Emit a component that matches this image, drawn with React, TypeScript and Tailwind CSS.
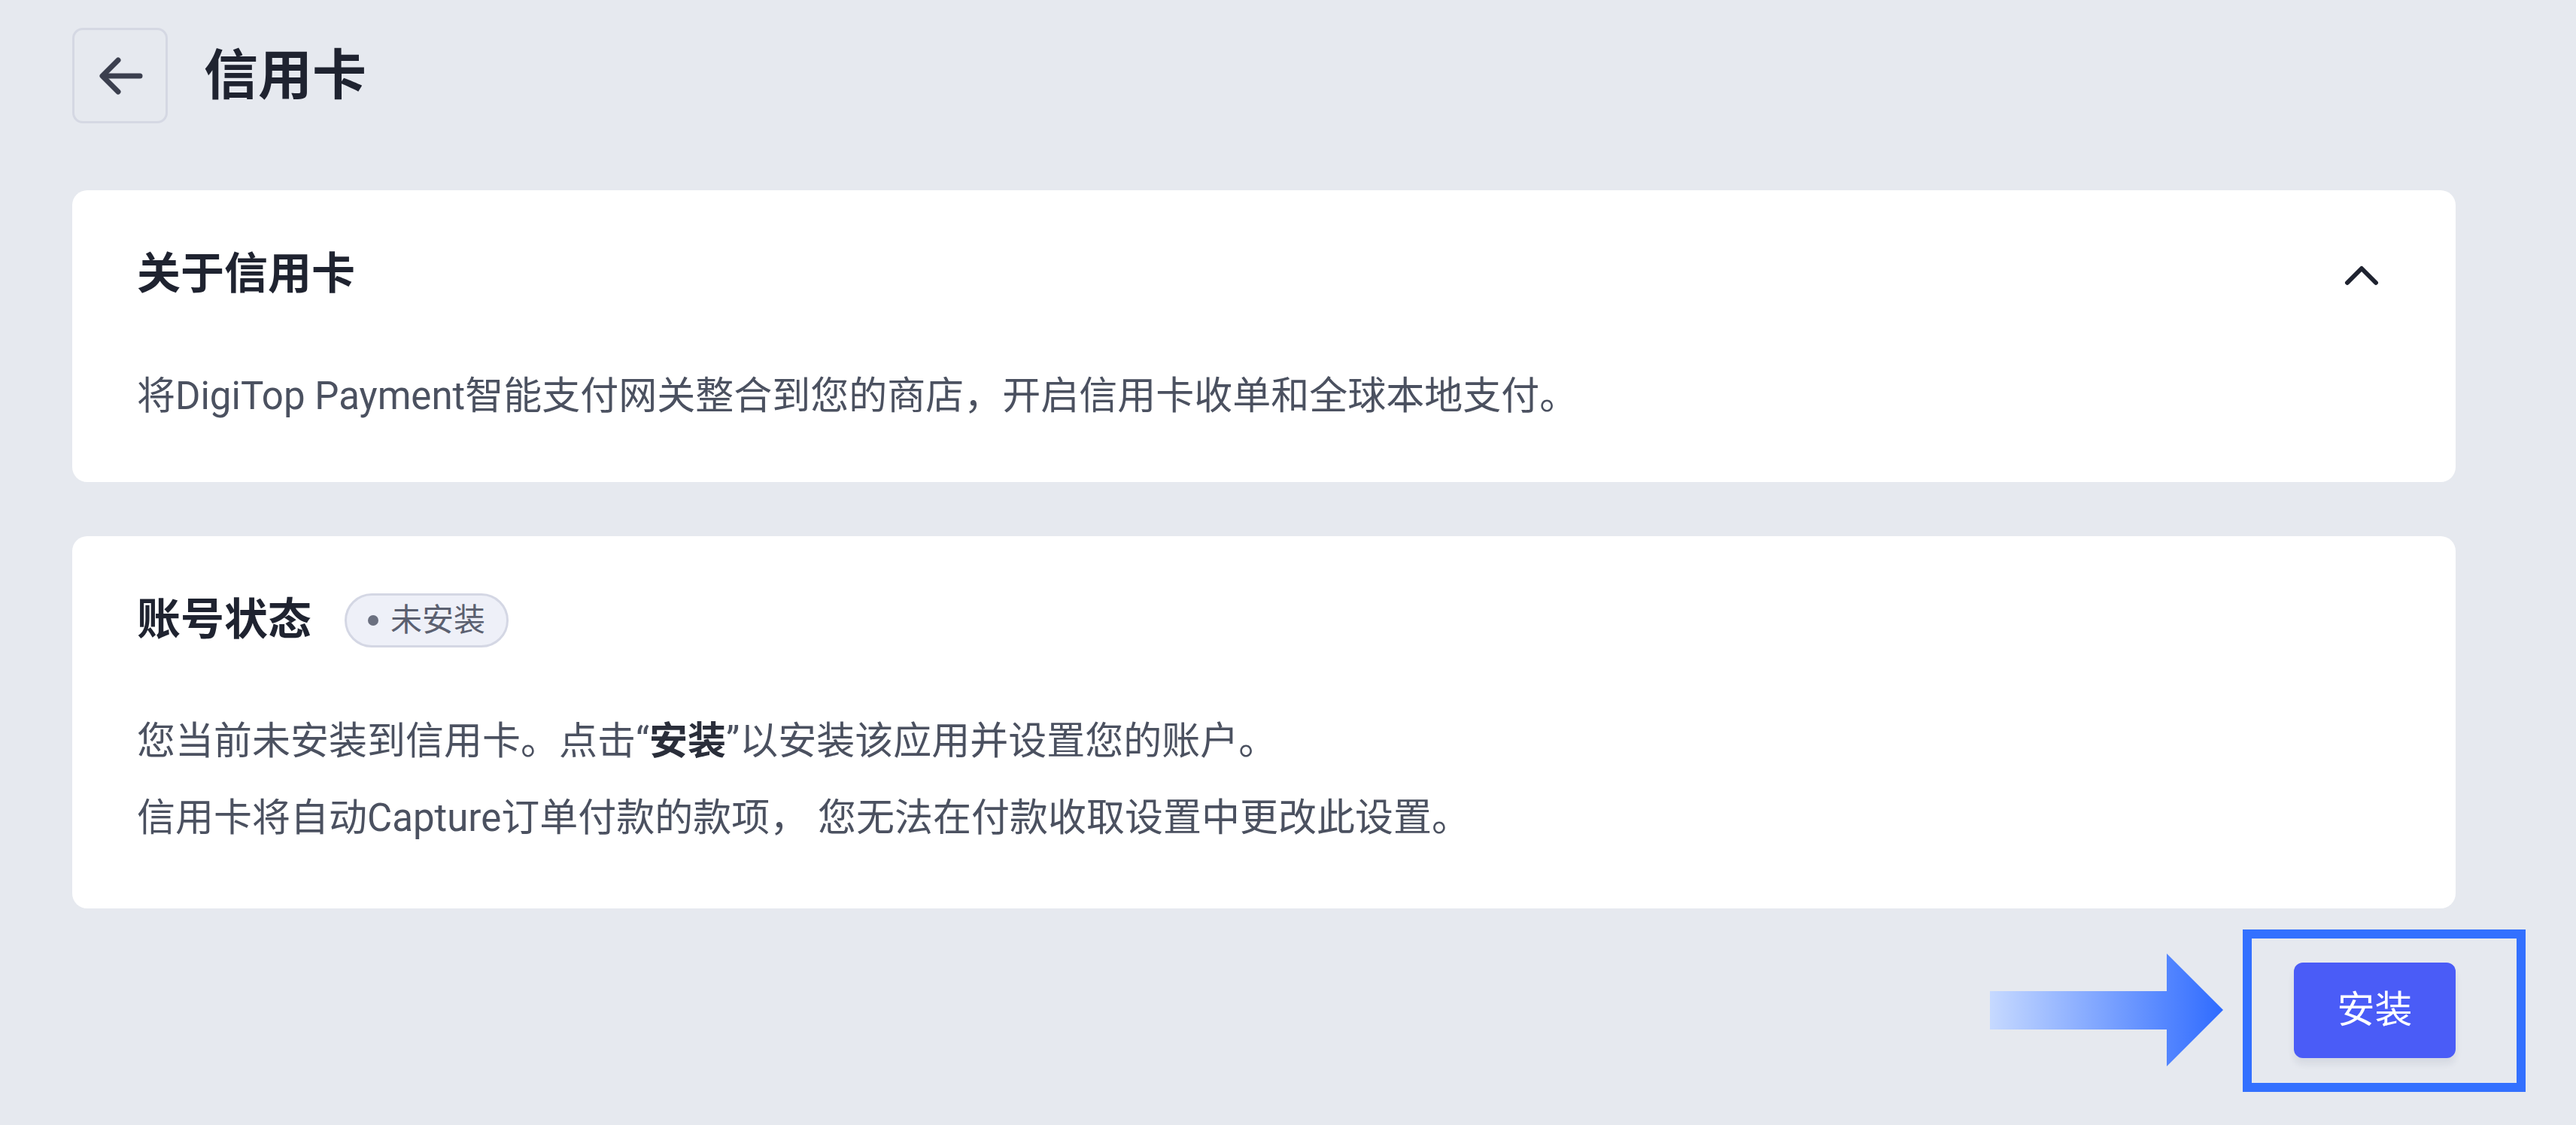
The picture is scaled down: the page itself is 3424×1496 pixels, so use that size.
import React from "react"

const font = "font-['Roboto','Noto_Sans_CJK_SC',sans-serif]"

function BackButton() {
  return (
    <button className="w-[127px] h-[127px] shrink-0 rounded-[14px] border-[3px] border-[#d5d8e3] flex items-center justify-center">
      <svg width="60" height="52" viewBox="0 0 60 52" fill="none">
        <path d="M56 26H8" stroke="#3b3f4e" strokeWidth="7" strokeLinecap="round" />
        <path d="M27 5L6 26L27 47" stroke="#3b3f4e" strokeWidth="7" strokeLinecap="round" strokeLinejoin="round" />
      </svg>
    </button>
  )
}

function ChevronUp() {
  return (
    <svg width="46" height="30" viewBox="0 0 46 30" fill="none">
      <path d="M4 26L23 7L42 26" stroke="#1f2330" strokeWidth="6" strokeLinecap="round" strokeLinejoin="round" />
    </svg>
  )
}

function Pointer() {
  // annotation arrow pointing at the install button
  return (
    <svg width="310" height="150" viewBox="0 0 310 150" className="absolute left-[-404px] top-[-12px]">
      <defs>
        <linearGradient id="arrowGrad" x1="0" y1="0" x2="310" y2="0" gradientUnits="userSpaceOnUse">
          <stop offset="0" stopColor="#c6d9ff" />
          <stop offset="1" stopColor="#2f6bff" />
        </linearGradient>
      </defs>
      <path d="M0 50H235V0L310 75L235 150V101H0Z" fill="url(#arrowGrad)" />
    </svg>
  )
}

export default function App() {
  return (
    <div className={`min-h-screen bg-[#e6e9ef] ${font} px-[96px] pt-[37px] pb-[80px]`}>
      <div className="w-[3168px]">
        {/* Header */}
        <div className="flex items-center gap-[48px]">
          <BackButton />
          <h1 className="text-[72px] leading-none font-semibold text-[#1f2330]">信用卡</h1>
        </div>

        {/* About card */}
        <div className="mt-[89px] bg-white rounded-[20px] px-[86px] pt-[68px] pb-[76px]">
          <div className="flex items-center justify-between h-[87px]">
            <h2 className="text-[58px] font-semibold text-[#1f2330]">关于信用卡</h2>
            <div className="mr-[16px] flex items-center">
              <ChevronUp />
            </div>
          </div>
          <p className="mt-[81px] text-[51px] leading-[76px] text-[#4b5160]">
            将DigiTop Payment智能支付网关整合到您的商店，开启信用卡收单和全球本地支付。
          </p>
        </div>

        {/* Account status card */}
        <div className="mt-[72px] bg-white rounded-[20px] px-[86px] pt-[68px] pb-[82px]">
          <div className="flex items-center gap-[44px] h-[87px]">
            <h2 className="text-[58px] font-semibold text-[#1f2330]">账号状态</h2>
            <span className="h-[72px] px-[28px] rounded-full border-[3px] border-[#d4d7e4] bg-[#eef0f8] flex items-center gap-[16px] text-[42px] text-[#5b6070]">
              <span className="w-[14px] h-[14px] rounded-full bg-[#6b7080]" />
              未安装
            </span>
          </div>
          <div className="mt-[80px] flex flex-col gap-[26px] text-[51px] leading-[76px] text-[#4b5160]">
            <p>
              您当前未安装到信用卡。点击“<span className="font-bold text-[#2a2e3a]">安装</span>”以安装该应用并设置您的账户。
            </p>
            <p>信用卡将自动Capture订单付款的款项， 您无法在付款收取设置中更改此设置。</p>
          </div>
        </div>

        {/* Action */}
        <div className="mt-[72px] flex justify-end">
          <div className="relative">
            <Pointer />
            <div className="absolute left-[-68px] top-[-44px] w-[376px] h-[216px] border-[12px] border-[#3370ff]" />
            <button className="relative w-[215px] h-[127px] rounded-[12px] bg-[#4a5cf7] text-white text-[50px] shadow-[0_8px_10px_rgba(30,40,80,0.08)]">
              安装
            </button>
          </div>
        </div>
      </div>
    </div>
  )
}
